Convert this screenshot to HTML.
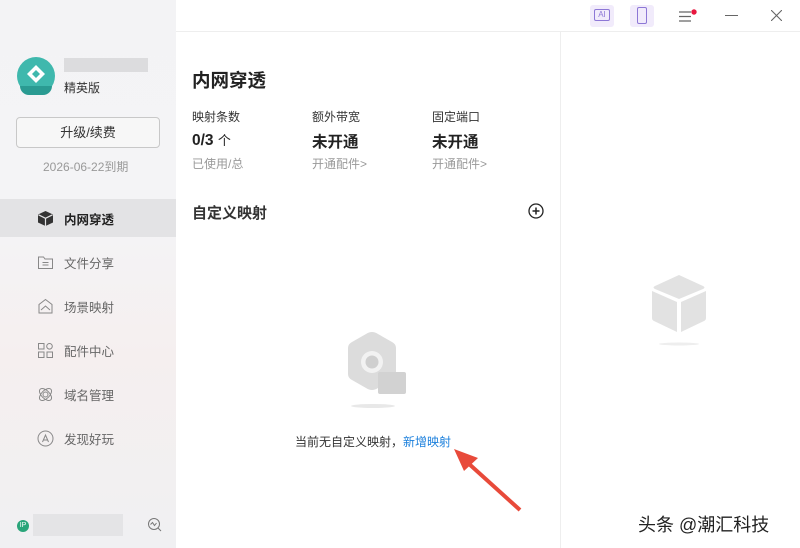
<!DOCTYPE html>
<html><head><meta charset="utf-8"><style>
*{margin:0;padding:0;box-sizing:border-box}
body{width:800px;height:548px;overflow:hidden;background:#fff;font-family:"Liberation Sans","Noto Sans CJK SC",sans-serif;position:relative;color:#222}
.side{position:absolute;left:0;top:0;width:176px;height:548px;background:linear-gradient(#f3f3f5 0%,#f4f4f6 40%,#f5efef 65%,#f0f0f2 100%)}
.a{position:absolute}
.nav{position:absolute;left:0;width:176px;height:38px;font-size:12.5px;color:#666;display:flex;align-items:center;padding-left:64px}
.nav svg{position:absolute;left:37px;top:11px}
.sm{font-size:12px;color:#999}
.lb{font-size:12px;color:#333}
.big{font-size:15.5px;font-weight:bold;color:#222}
</style></head><body>
<div class="side">
  <div class="a" style="left:17px;top:57px;width:38px;height:38px;border-radius:50%;background:#3fb8ad"></div>
  <div class="a" style="left:20px;top:86px;width:32px;height:9px;border-radius:0 0 10px 10px;background:#2a9b92"></div>
  <svg class="a" style="left:25px;top:64px" width="22" height="20" viewBox="0 0 22 20"><path d="M11 1 L20 10 L11 19 L2 10Z" fill="#fff"/><path d="M11 6 L15 10 L11 14 L7 10Z" fill="#3fb8ad"/></svg>
  <div class="a" style="left:64px;top:58px;width:84px;height:14px;background:#dcdcde"></div>
  <div class="a" style="left:64px;top:79px;font-size:12px;color:#333">精英版</div>
  <div class="a" style="left:16px;top:117px;width:144px;height:31px;border:1px solid #c8c8c8;border-radius:4px;background:#f7f7f7;font-size:13px;text-align:center;line-height:29px;color:#333">升级/续费</div>
  <div class="a" style="left:43px;top:158px;font-size:12px;color:#999">2026-06-22到期</div>
  <div class="nav" style="top:199px;background:#e3e3e5;color:#222;font-weight:bold"><svg width="17" height="17" viewBox="0 0 17 17"><path d="M8.5 1 L16 4.5 V12.5 L8.5 16 L1 12.5 V4.5Z" fill="#333"/><path d="M1.5 4.8 L8.5 8.3 L15.5 4.8 M8.5 8.3 V16" stroke="#e3e3e5" stroke-width="1.2" fill="none"/></svg>内网穿透</div>
  <div class="nav" style="top:243px"><svg width="17" height="17" viewBox="0 0 17 17" fill="none" stroke="#888"><path d="M1.5 3h5l1.5 2h7.5v9.5h-14z"/><path d="M5.5 8.5h6M5.5 11h6"/></svg>文件分享</div>
  <div class="nav" style="top:287px"><svg width="17" height="17" viewBox="0 0 17 17" fill="none" stroke="#888"><path d="M8.5 1.5l6.5 5v8.5h-13v-8.5z"/><path d="M4 12l4.5-4 4.5 4"/></svg>场景映射</div>
  <div class="nav" style="top:331px"><svg width="17" height="17" viewBox="0 0 17 17" fill="none" stroke="#888"><rect x="1.5" y="1.5" width="5.5" height="5.5"/><circle cx="12.5" cy="4.3" r="2.8"/><rect x="1.5" y="10" width="5.5" height="5.5"/><rect x="10" y="10" width="5.5" height="5.5"/></svg>配件中心</div>
  <div class="nav" style="top:375px"><svg width="17" height="17" viewBox="0 0 17 17" fill="none" stroke="#888"><ellipse cx="8.5" cy="8.5" rx="7.5" ry="4" transform="rotate(45 8.5 8.5)"/><ellipse cx="8.5" cy="8.5" rx="7.5" ry="4" transform="rotate(-45 8.5 8.5)"/><circle cx="8.5" cy="8.5" r="2.5"/></svg>域名管理</div>
  <div class="nav" style="top:419px"><svg width="17" height="17" viewBox="0 0 17 17" fill="none" stroke="#888"><circle cx="8.5" cy="8.5" r="7.5"/><path d="M5.5 12l3-7 3 7M6.5 10h4"/></svg>发现好玩</div>
  <div class="a" style="left:17px;top:520px;width:12px;height:12px;border-radius:50%;background:#2aa57a;color:#fff;font-size:7px;text-align:center;line-height:12px">IP</div>
  <div class="a" style="left:33px;top:514px;width:90px;height:22px;background:#e4e4e6"></div>
  <svg class="a" style="left:147px;top:517px" width="15" height="15" viewBox="0 0 15 15" fill="none" stroke="#777"><circle cx="7" cy="7" r="5.5"/><path d="M3.5 7.5l2-2 2 3 2-2.5M11 11l3 3"/></svg>
</div>
<div class="a" style="left:176px;top:31px;width:624px;height:1px;background:#eee"></div>
<div class="a" style="left:590px;top:5px;width:24px;height:22px;background:#f1ebfb;border-radius:3px"></div>
<div class="a" style="left:594px;top:9px;width:16px;height:12px;border:1px solid #8d77d6;border-radius:2px;font-size:8px;color:#8d77d6;text-align:center;line-height:10px">AI</div>
<div class="a" style="left:630px;top:5px;width:24px;height:22px;background:#f1ebfb;border-radius:3px"></div>
<div class="a" style="left:637px;top:7px;width:10px;height:17px;border:1px solid #8d77d6;border-radius:2px"></div>
<svg class="a" style="left:678px;top:9px" width="20" height="14"><path d="M1 3h12M1 7.5h12M1 12h12" stroke="#666" stroke-width="1.2"/><circle cx="16" cy="3" r="2.7" fill="#e8173f"/></svg>
<div class="a" style="left:725px;top:15px;width:13px;height:1px;background:#666"></div>
<svg class="a" style="left:771px;top:10px" width="11" height="11"><path d="M0 0L11 11M11 0L0 11" stroke="#666" stroke-width="1.1"/></svg>
<div class="a" style="left:560px;top:32px;width:1px;height:516px;background:#eee"></div>
<div class="a" style="left:192px;top:67px;font-size:18.5px;font-weight:bold;color:#222">内网穿透</div>
<div class="a lb" style="left:192px;top:108px">映射条数</div>
<div class="a big" style="left:192px;top:130px">0/3 <span style="font-weight:normal;font-size:13px">个</span></div>
<div class="a sm" style="left:192px;top:155px">已使用/总</div>
<div class="a lb" style="left:312px;top:108px">额外带宽</div>
<div class="a big" style="left:312px;top:130px">未开通</div>
<div class="a sm" style="left:312px;top:155px">开通配件&gt;</div>
<div class="a lb" style="left:432px;top:108px">固定端口</div>
<div class="a big" style="left:432px;top:130px">未开通</div>
<div class="a sm" style="left:432px;top:155px">开通配件&gt;</div>
<div class="a" style="left:192px;top:202px;font-size:15px;font-weight:bold;color:#333">自定义映射</div>
<svg class="a" style="left:528px;top:203px" width="16" height="16"><circle cx="8" cy="8" r="7" fill="none" stroke="#222" stroke-width="1.3"/><path d="M8 4.5v7M4.5 8h7" stroke="#222" stroke-width="1.5"/></svg>
<svg class="a" style="left:330px;top:330px" width="90" height="80"><path d="M42 2 Q45 2 48 4 L62 12 Q66 14 66 18 L66 44 Q66 48 62 50 L48 58 Q45 60 42 60 Q39 60 36 58 L22 50 Q18 48 18 44 L18 18 Q18 14 22 12 L36 4 Q39 2 42 2Z" fill="#dcdcdc"/><circle cx="42" cy="32" r="11" fill="#f2f2f2"/><circle cx="42" cy="32" r="6.5" fill="#cfcfcf"/><rect x="48" y="42" width="28" height="22" rx="2" fill="#d2d2d2"/><ellipse cx="43" cy="76" rx="22" ry="2" fill="#e8e8e8"/></svg>
<div class="a" style="left:295px;top:433px;font-size:12px;color:#333">当前无自定义映射，<span style="color:#1a7fdc">新增映射</span></div>
<svg class="a" style="left:450px;top:445px" width="75" height="68"><path d="M70 65 L18 18" stroke="#e84a3a" stroke-width="4"/><path d="M4 4 L28 13 L14 26Z" fill="#e84a3a"/></svg>
<svg class="a" style="left:650px;top:272px" width="58" height="76"><path d="M29 3 L53 14 Q56 15.5 53 17 L29 27 L5 17 Q2 15.5 5 14Z" fill="#e2e2e2"/><path d="M2 19 L27 30 V60 L4 49 Q2 48 2 46Z" fill="#e2e2e2"/><path d="M56 19 L31 30 V60 L54 49 Q56 48 56 46Z" fill="#e2e2e2"/><ellipse cx="29" cy="72" rx="20" ry="1.5" fill="#eeeeee"/></svg>
<div class="a" style="left:638px;top:511px;font-size:18px;color:#222">头条 @潮汇科技</div>
</body></html>
